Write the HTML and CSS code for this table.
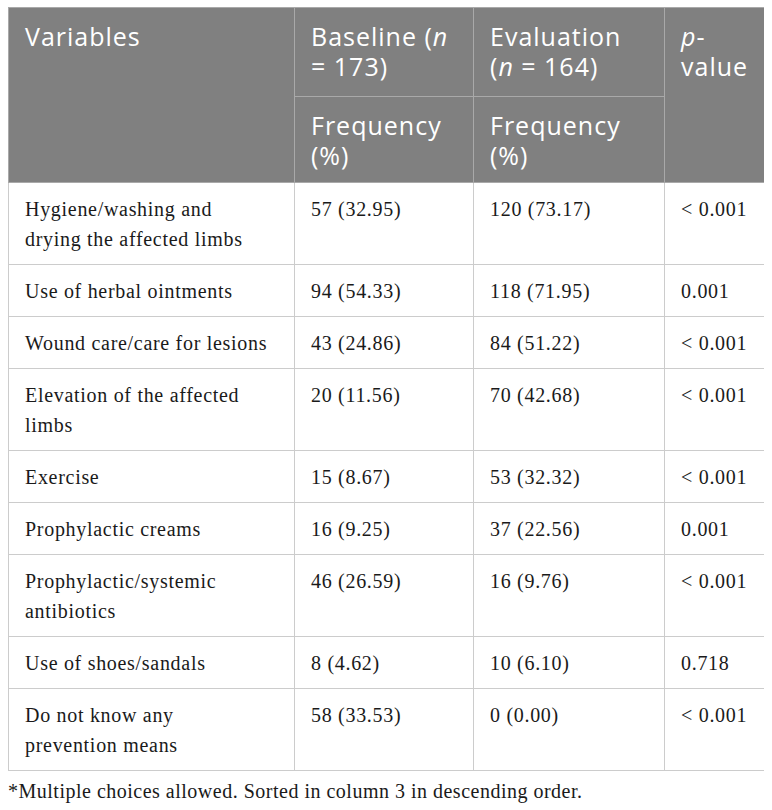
FILE: index.html
```html
<!DOCTYPE html>
<html lang="en">
<head>
  <meta charset="UTF-8">
  <title>Prevention means</title>
  <meta name="viewport" content="width=device-width, initial-scale=1.0">
  <link rel="stylesheet" href="styles.css">
</head>
<body>
  <table class="data-table">
    <colgroup>
      <col class="col-var">
      <col class="col-base">
      <col class="col-eval">
      <col class="col-p">
    </colgroup>
    <thead>
      <tr class="head-top">
        <th rowspan="2">Variables</th>
        <th>Baseline (<i>n</i><br>= 173)</th>
        <th>Evaluation<br>(<i>n</i> = 164)</th>
        <th rowspan="2"><i>p</i>-<br>value</th>
      </tr>
      <tr class="head-sub">
        <th>Frequency<br>(%)</th>
        <th>Frequency<br>(%)</th>
      </tr>
    </thead>
    <tbody>
      <tr>
        <td>Hygiene/washing and<br>drying the affected limbs</td>
        <td>57 (32.95)</td>
        <td>120 (73.17)</td>
        <td>&lt; 0.001</td>
      </tr>
      <tr>
        <td>Use of herbal ointments</td>
        <td>94 (54.33)</td>
        <td>118 (71.95)</td>
        <td>0.001</td>
      </tr>
      <tr>
        <td>Wound care/care for lesions</td>
        <td>43 (24.86)</td>
        <td>84 (51.22)</td>
        <td>&lt; 0.001</td>
      </tr>
      <tr>
        <td>Elevation of the affected<br>limbs</td>
        <td>20 (11.56)</td>
        <td>70 (42.68)</td>
        <td>&lt; 0.001</td>
      </tr>
      <tr>
        <td>Exercise</td>
        <td>15 (8.67)</td>
        <td>53 (32.32)</td>
        <td>&lt; 0.001</td>
      </tr>
      <tr>
        <td>Prophylactic creams</td>
        <td>16 (9.25)</td>
        <td>37 (22.56)</td>
        <td>0.001</td>
      </tr>
      <tr>
        <td>Prophylactic/systemic<br>antibiotics</td>
        <td>46 (26.59)</td>
        <td>16 (9.76)</td>
        <td>&lt; 0.001</td>
      </tr>
      <tr>
        <td>Use of shoes/sandals</td>
        <td>8 (4.62)</td>
        <td>10 (6.10)</td>
        <td>0.718</td>
      </tr>
      <tr>
        <td>Do not know any<br>prevention means</td>
        <td>58 (33.53)</td>
        <td>0 (0.00)</td>
        <td>&lt; 0.001</td>
      </tr>
    </tbody>
  </table>

  <p class="note">*Multiple choices allowed. Sorted in column 3 in descending order.</p>
</body>
</html>
```

FILE: styles.css
```css
body {
  margin: 7px 8px;
  background-color: #fff;
  color: #1a1a1a;
  font-family: "Liberation Serif", "Times New Roman", serif;
}

.data-table {
  width: 756px;
  border-collapse: collapse;
  table-layout: fixed;
}

.col-var { width: 286px; }
.col-base { width: 179px; }
.col-eval { width: 191px; }
.col-p { width: 100px; }

/* Kopfzeilen */
.data-table th {
  background-color: #808080;
  color: #fff;
  font-family: "Open Sans", "DejaVu Sans", sans-serif;
  font-size: 25px;
  font-weight: 400;
  letter-spacing: 1px;
  line-height: 30px;
  text-align: left;
  vertical-align: top;
  border: 1px solid #a9a9a9;
  padding: 13px 16px 15px;
}

.data-table .head-sub th {
  padding-bottom: 12px;
}

.data-table thead {
  border-bottom: 1px solid #6e6e6e;
}

.data-table td {
  font-size: 20px;
  letter-spacing: 0.7px;
  line-height: 30px;
  vertical-align: top;
  border: 1px solid #cccccc;
  padding: 11px 16px 10px;
}

.note {
  margin: 5px 0 0;
  font-size: 20px;
  line-height: 30px;
  letter-spacing: 0.5px;
}
```
